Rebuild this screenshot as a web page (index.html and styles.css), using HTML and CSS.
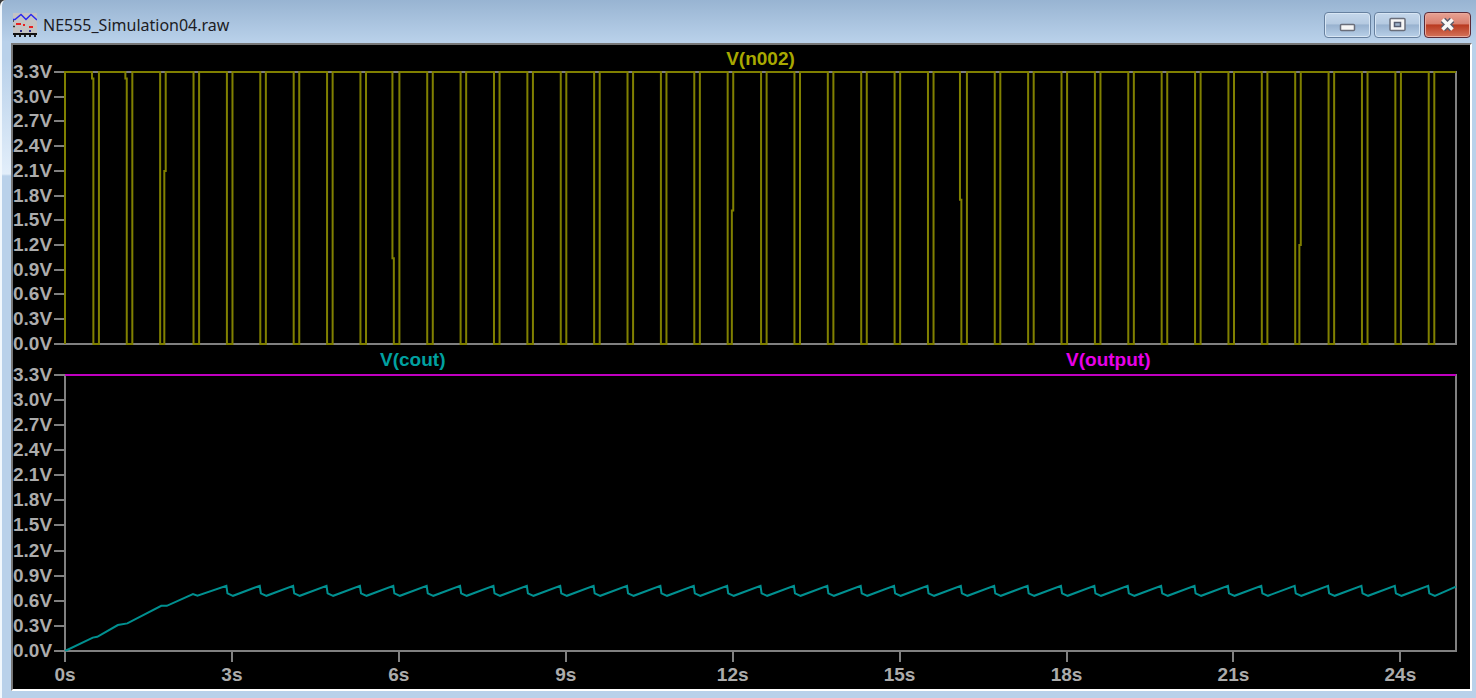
FILE: index.html
```html
<!DOCTYPE html>
<html lang="en">
  <head>
    <meta charset="UTF-8" />
    <meta name="viewport" content="width=device-width, initial-scale=1.0" />
    <title>NE555_Simulation04.raw</title>
    <link rel="stylesheet" href="styles.css">
    <script src="plot.js" defer></script>
  </head>
  <body>
    <div class="window">
      <!-- title bar -->
      <header class="titlebar">
        <svg class="app-icon" width="24" height="24" viewBox="0 0 24 24">
          <rect width="24" height="22" fill="#c4c4c4" />
          <path d="M0 6.500h2l6-5 5 5 5-5 6 5.500" fill="none" stroke="#2a2af0" stroke-width="1.500" />
          <path d="M3 11h5M10 12h2M16 14h4" stroke="#e82020" stroke-width="2" />
          <path d="M0 8h1M0 13.500h2" stroke="#333" stroke-width="1.500" />
          <path d="M7 18h2M16 18h2" stroke="#303090" stroke-width="2" />
          <path d="M0 21h24" stroke="#111" stroke-width="2" />
          <path d="M1 23h2M6 23h2M11 23h2M16 23h2M21 23h2" stroke="#222" stroke-width="2" />
        </svg>
        <h1 class="title">NE555_Simulation04.raw</h1>
        <div class="controls">
          <button class="ctl" type="button" aria-label="Minimize">
            <svg width="18" height="16" viewBox="0 0 18 16">
              <rect x="1.500" y="7.500" width="14" height="6" rx="1" fill="#f6f6f6" stroke="#6a6e7a" stroke-width="1.500" />
            </svg>
          </button>
          <button class="ctl" type="button" aria-label="Maximize">
            <svg width="18" height="16" viewBox="0 0 18 16">
              <rect x="1" y="1.500" width="15" height="12" rx="1" fill="#f6f6f6" stroke="#6a6e7a" stroke-width="1.500" />
              <rect x="5.500" y="5.500" width="6" height="4" fill="#9fb4cc" stroke="#565c70" stroke-width="1.500" />
            </svg>
          </button>
          <button class="ctl close" type="button" aria-label="Close">
            <svg width="18" height="16" viewBox="0 0 18 16">
              <path d="M4 3l9 9M13 3l-9 9" stroke="#5c5c6c" stroke-width="6.500" />
              <path d="M3.500 2.500l10 10M13.500 2.500l-10 10" stroke="#f8f8f8" stroke-width="3.500" />
            </svg>
          </button>
        </div>
      </header>

      <!-- waveform viewer -->
      <main class="viewer">
        <section class="pane">
          <div class="traces"><span class="n002">V(n002)</span></div>
          <div class="axis-y"></div>
          <svg class="plot" id="plot-top" viewBox="0 0 25 3.3" preserveAspectRatio="none"></svg>
        </section>
        <section class="pane">
          <div class="traces"><span class="cout">V(cout)</span><span class="output">V(output)</span></div>
          <div class="axis-y"></div>
          <svg class="plot" id="plot-bottom" viewBox="0 0 25 3.3" preserveAspectRatio="none"></svg>
        </section>
        <div class="axis-x"></div>
      </main>
    </div>
  </body>
</html>
```
FILE: styles.css
```css
* {
  box-sizing: border-box;
}
body {
  margin: 0;
  background: #3a3a3a;
  font-family: "Liberation Sans", Arial, sans-serif;
}
.window {
  display: flex;
  flex-direction: column;
  height: 100vh;
  padding: 0 4px 7px 9px;
  border-left: 2px solid #f2f8fd;
  border-radius: 6px 0 0 0;
  /* glass reflection down the left edge, then the title bar fade */
  background:
    linear-gradient(to bottom, transparent 60px, #e2eefa 174px, transparent 176px) no-repeat 0 0 / 9px 100%,
    linear-gradient(to bottom, #98b4d2 0, #b9d1ea 42px);
}

/* title bar */
.titlebar {
  display: flex;
  align-items: center;
  height: 43px;
  padding: 7px 1px 0 2px;
}
.title {
  flex: 1;
  margin: 0 0 0 6px;
  font: 16px/24px "Noto Sans", sans-serif;
  color: #1c1c24;
}
.controls {
  display: flex;
  gap: 3px;
}
.ctl {
  display: flex;
  align-items: center;
  justify-content: center;
  width: 47px;
  height: 26px;
  padding: 0;
  border: 1px solid #66809f;
  border-radius: 4px;
  background: linear-gradient(to bottom, #c5d7eb 0, #b5cae1 45%, #98b2cf 50%, #b8d0e8 100%);
  box-shadow: inset 0 0 0 1px #d8e6f4;
}
.ctl.close {
  border-color: #592a38;
  background: linear-gradient(to bottom, #e7a294 0, #d9806f 45%, #b93a20 50%, #d4735a 100%);
  box-shadow: inset 0 0 0 1px #e9aa9c;
}

/* black plotting area */
.viewer {
  flex: 1;
  display: flex;
  flex-direction: column;
  min-height: 0;
  border: 2px solid;
  border-color: #777 #fff #fff #777;
  padding-right: 14px;
  background: #000;
  color: #acacac;
  font-size: 19px;
  font-weight: bold;
  line-height: 20px;
}
.pane {
  flex: 299 1 0;
  display: grid;
  grid-template: 27px minmax(0, 1fr) / 52px minmax(0, 1fr);
}
.pane + .pane {
  flex-grow: 307;
  grid-template-rows: 31px minmax(0, 1fr);
}
.traces {
  grid-column: 2;
  display: flex;
  align-items: center;
}
.traces span {
  flex: 1;
  text-align: center;
}
.n002 {
  color: #a8a800;
}
.cout {
  color: #00a0a0;
}
.output {
  color: #e800e8;
}

.axis-y {
  display: flex;
  flex-direction: column;
  justify-content: space-between;
  margin: -10px 0;
}
.axis-y span {
  display: flex;
  align-items: center;
  justify-content: space-between;
}
.axis-y span::after {
  content: "";
  width: 11px;
  height: 2px;
  background: #808080;
}
.plot {
  display: block;
  width: 100%;
  height: 100%;
  overflow: visible;
}
.plot path {
  fill: none;
  stroke-width: 2px;
  vector-effect: non-scaling-stroke;
}
.plot .frame {
  stroke: #808080;
}
.plot .n002 {
  stroke: #808000;
}
.plot .cout {
  stroke: #009090;
}
.plot .output {
  stroke: #c000c0;
}

/* time axis, 3s per column and 1s left over */
.axis-x {
  display: grid;
  grid-template-columns: repeat(8, 3fr) 1fr;
  height: 38px;
  margin-left: 52px;
}
.axis-x span {
  width: 60px;
  margin-left: -30px;
  text-align: center;
}
.axis-x span::before {
  content: "";
  display: block;
  width: 2px;
  height: 11px;
  margin: 0 auto 3px;
  background: #808080;
}
```
FILE: plot.js
```js
const VMAX = 3.3;
const TEND = 25;
const PERIOD = 0.6;

// voltage axis labels
document.querySelectorAll(".axis-y").forEach(axis => {
  for (let i = 11; i >= 0; i--) {
    axis.innerHTML += `<span>${(i * 0.3).toFixed(1)}V</span>`;
  }
});

// time axis labels
const axisX = document.querySelector(".axis-x");
for (let t = 0; t <= 24; t += 3) {
  axisX.innerHTML += `<span>${t}s</span>`;
}

function draw(id, name, points, closed) {
  const path = document.createElementNS("http://www.w3.org/2000/svg", "path");
  path.setAttribute("class", name);
  path.setAttribute("d", "M" + points.map(([t, v]) => `${t} ${VMAX - v}`).join("L") + (closed ? "Z" : ""));
  document.getElementById(id).appendChild(path);
}

const frame = [[0, 0], [0, VMAX], [TEND, VMAX], [TEND, 0]];
draw("plot-top", "frame", frame, true);
draw("plot-bottom", "frame", frame, true);

// edges that have a sample part way: pulse number -> voltage
const fallStep = { 0: 3.22, 1: 3.22, 9: 1.04, 26: 1.75 };
const riseStep = { 2: 2.1, 19: 1.62, 36: 1.2 };
const STEP = 0.025;

// 555 discharge pulses: short low time once per period
const n002 = [[0, 0], [0, VMAX]];
for (let k = 0; k < 41; k++) {
  const fall = 0.51 + k * PERIOD;
  const rise = fall + 0.1;
  if (k in fallStep) {
    n002.push([fall - STEP, VMAX], [fall - STEP, fallStep[k]], [fall, fallStep[k]], [fall, 0]);
  } else {
    n002.push([fall, VMAX], [fall, 0]);
  }
  if (k in riseStep) {
    n002.push([rise - STEP, 0], [rise - STEP, riseStep[k]], [rise, riseStep[k]], [rise, VMAX]);
  } else {
    n002.push([rise, 0], [rise, VMAX]);
  }
}
n002.push([TEND, VMAX]);
draw("plot-top", "n002", n002);

// capacitor charges up, then settles into a sawtooth
const cout = [[0, 0], [0.5, 0.16], [0.58, 0.17], [0.95, 0.31], [1.12, 0.33], [1.73, 0.54], [1.83, 0.54], [2.3, 0.68], [2.38, 0.66]];
for (let t = 2.9; t < TEND; t += PERIOD) {
  cout.push([t, 0.78], [t + 0.02, 0.69], [t + 0.12, 0.66]);
}
cout.push([TEND, 0.77]);
draw("plot-bottom", "cout", cout);

draw("plot-bottom", "output", [[0, VMAX], [TEND, VMAX]]);
```
